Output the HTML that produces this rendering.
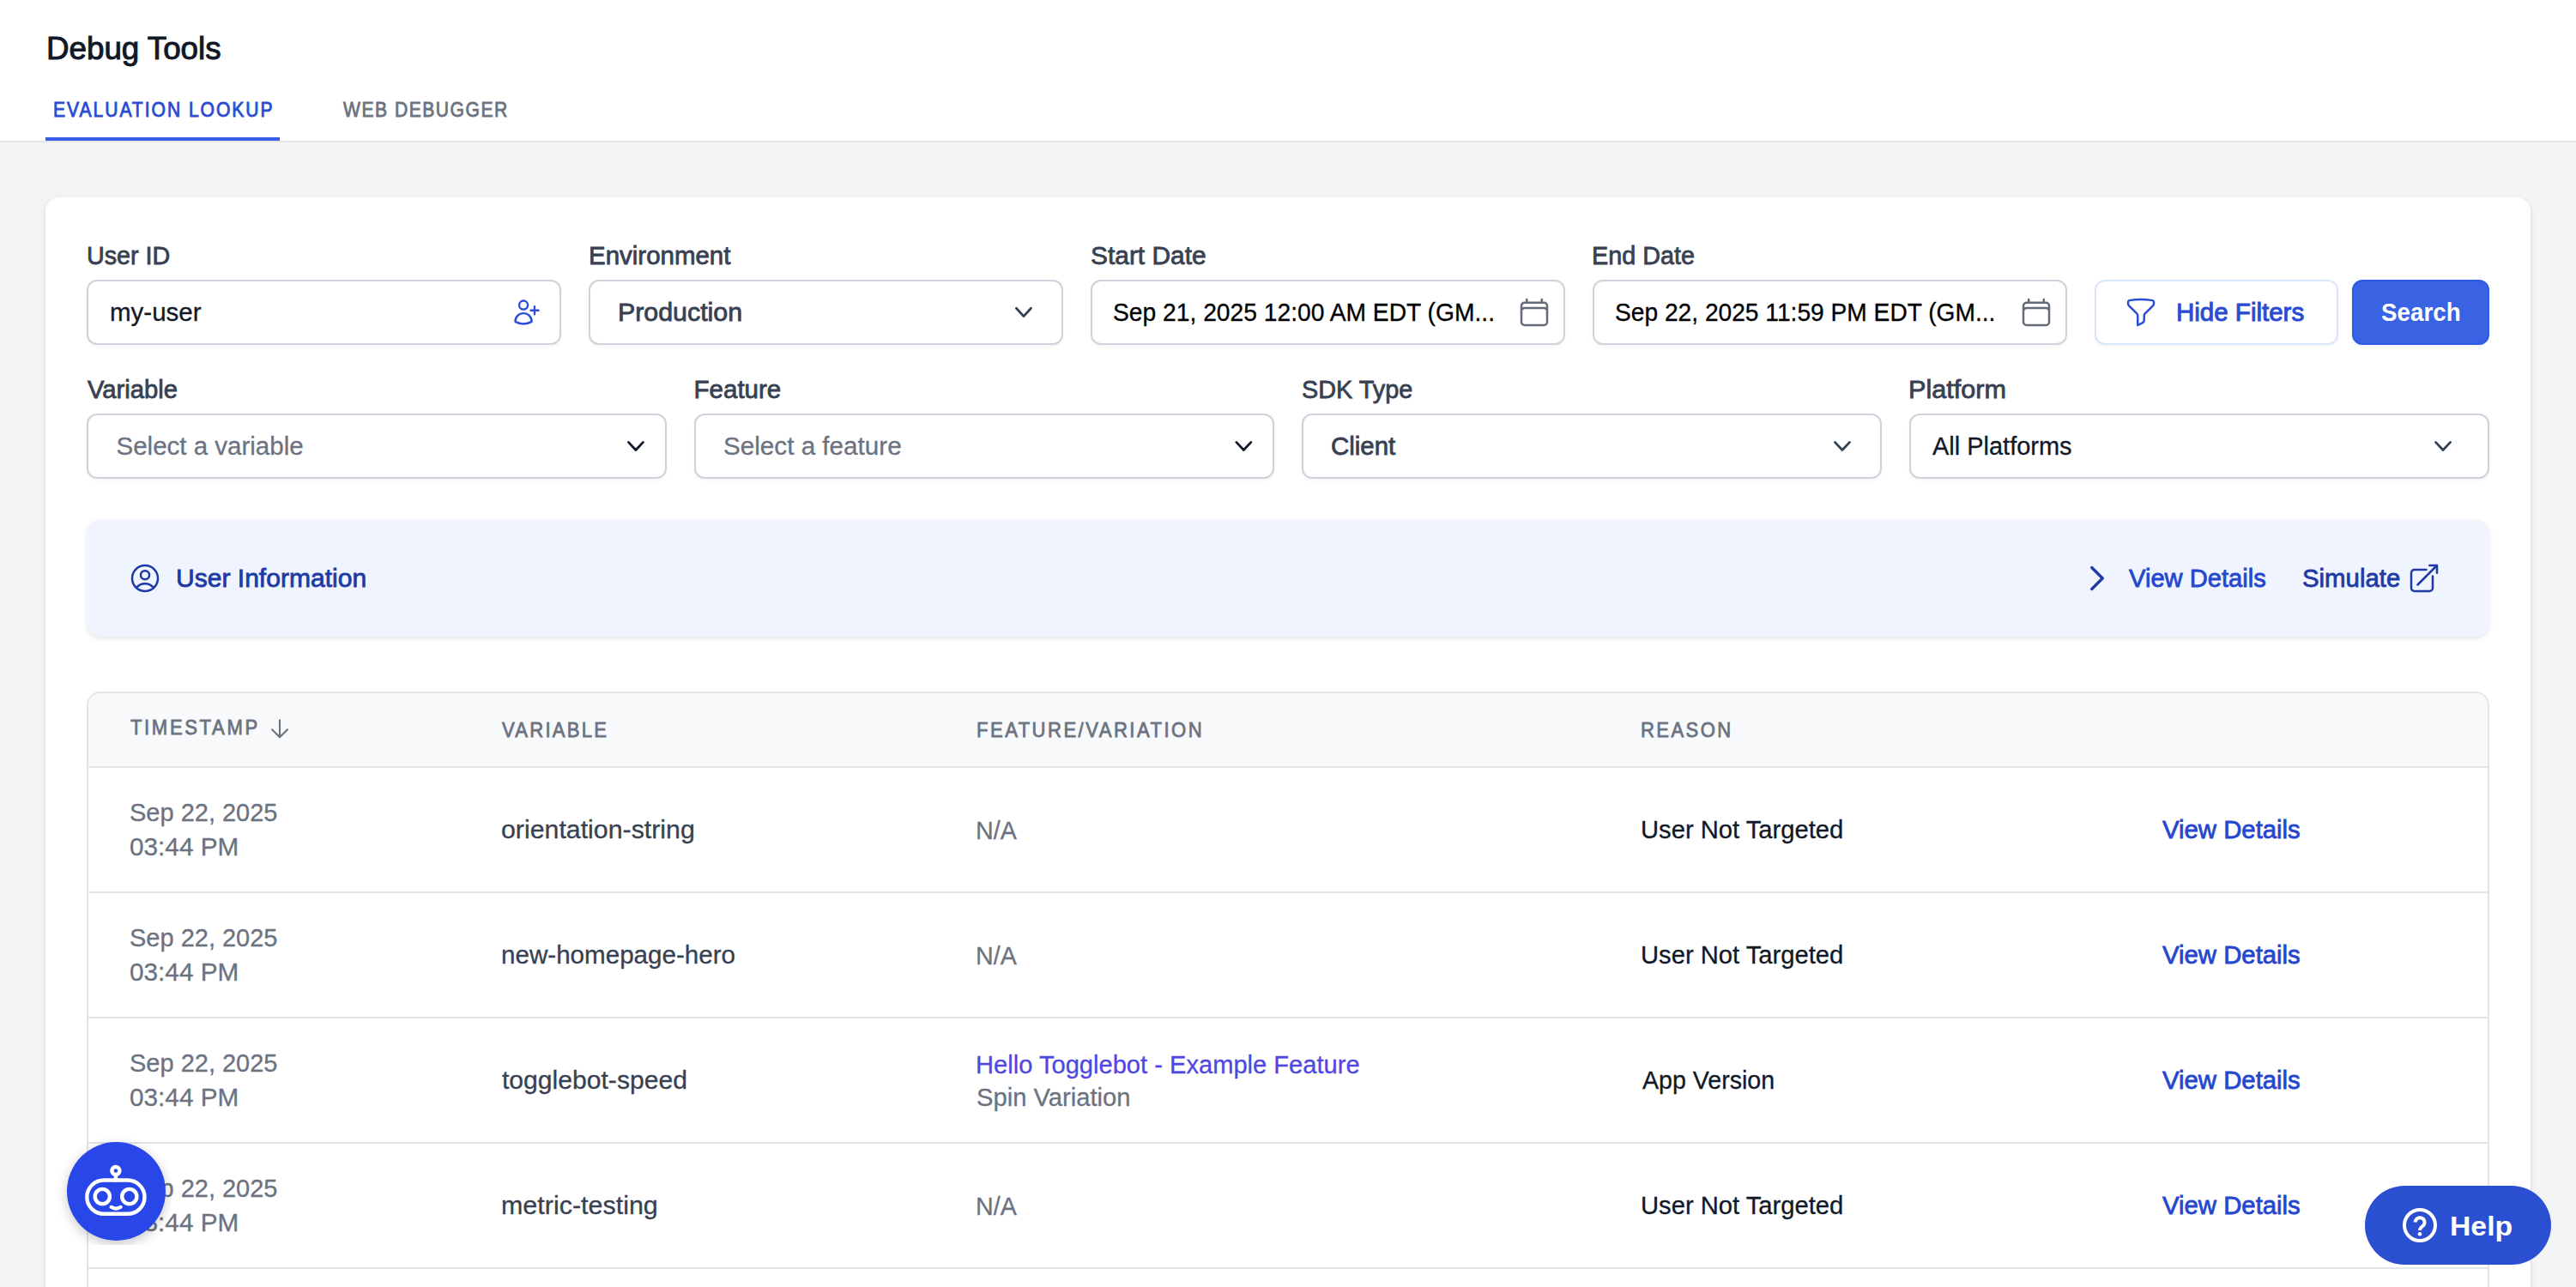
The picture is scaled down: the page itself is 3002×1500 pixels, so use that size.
<!DOCTYPE html>
<html><head><meta charset="utf-8"><title>Debug Tools</title>
<style>
html,body{margin:0;padding:0;}
body{width:3002px;height:1500px;overflow:hidden;position:relative;background:#f3f4f6;font-family:"Liberation Sans",sans-serif;}
.t{position:absolute;white-space:nowrap;}
svg{overflow:visible}
</style></head><body>
<div style="position:absolute;left:0px;top:0px;width:3002px;height:164px;background:#fff"></div>
<div style="position:absolute;left:0px;top:164px;width:3002px;height:2px;background:#e4e5e9"></div>
<div class="t" style="left:53.69px;top:38.70px;font-size:36.5px;line-height:36.5px;color:#111827;transform:scaleX(1.0065);transform-origin:0 0;-webkit-text-stroke-width:1.0px;">Debug Tools</div>
<div class="t" style="left:61.84px;top:116.26px;font-size:24.5px;line-height:24.5px;color:#2a4bd2;letter-spacing:2.294px;transform:scaleX(0.8600);transform-origin:0 0;-webkit-text-stroke-width:0.9px;">EVALUATION LOOKUP</div>
<div class="t" style="left:399.66px;top:116.26px;font-size:24.5px;line-height:24.5px;color:#6b7280;letter-spacing:1.772px;transform:scaleX(0.8600);transform-origin:0 0;-webkit-text-stroke-width:0.9px;">WEB DEBUGGER</div>
<div style="position:absolute;left:53px;top:160px;width:273px;height:4px;background:#3a5de6"></div>
<div style="position:absolute;left:53px;top:230px;width:2896px;height:1470px;background:#fff;border-radius:16px;box-shadow:0 2px 6px 0 rgba(0,0,0,0.1),0 2px 4px -2px rgba(0,0,0,0.1)"></div>
<div class="t" style="left:101.15px;top:283.32px;font-size:29.5px;line-height:29.5px;color:#374151;transform:scaleX(0.9732);transform-origin:0 0;-webkit-text-stroke-width:0.8px;">User ID</div>
<div class="t" style="left:685.50px;top:283.32px;font-size:29.5px;line-height:29.5px;color:#374151;transform:scaleX(0.9988);transform-origin:0 0;-webkit-text-stroke-width:0.8px;">Environment</div>
<div class="t" style="left:1270.69px;top:283.32px;font-size:29.5px;line-height:29.5px;color:#374151;transform:scaleX(1.0137);transform-origin:0 0;-webkit-text-stroke-width:0.8px;">Start Date</div>
<div class="t" style="left:1855.05px;top:283.32px;font-size:29.5px;line-height:29.5px;color:#374151;transform:scaleX(0.9750);transform-origin:0 0;-webkit-text-stroke-width:0.8px;">End Date</div>
<div style="position:absolute;left:101px;top:326px;width:553px;height:76px;background:#fff;border:2px solid #cfd2db;border-radius:12px;box-sizing:border-box;box-shadow:0 2px 4px rgba(0,0,0,0.04)"></div>
<div style="position:absolute;left:686px;top:326px;width:553px;height:76px;background:#fff;border:2px solid #cfd2db;border-radius:12px;box-sizing:border-box;box-shadow:0 2px 4px rgba(0,0,0,0.04)"></div>
<div style="position:absolute;left:1271px;top:326px;width:553px;height:76px;background:#fff;border:2px solid #cfd2db;border-radius:12px;box-sizing:border-box;box-shadow:0 2px 4px rgba(0,0,0,0.04)"></div>
<div style="position:absolute;left:1856px;top:326px;width:553px;height:76px;background:#fff;border:2px solid #cfd2db;border-radius:12px;box-sizing:border-box;box-shadow:0 2px 4px rgba(0,0,0,0.04)"></div>
<div class="t" style="left:128.00px;top:349.02px;font-size:29.5px;line-height:29.5px;color:#111827;-webkit-text-stroke-width:0.3px;">my-user</div>
<div class="t" style="left:719.94px;top:349.02px;font-size:29.5px;line-height:29.5px;color:#374151;transform:scaleX(1.0290);transform-origin:0 0;-webkit-text-stroke-width:0.8px;">Production</div>
<div class="t" style="left:1297.04px;top:349.02px;font-size:29.5px;line-height:29.5px;color:#000;transform:scaleX(0.9567);transform-origin:0 0;-webkit-text-stroke-width:0.3px;">Sep 21, 2025 12:00 AM EDT (GM...</div>
<div class="t" style="left:1882.05px;top:349.02px;font-size:29.5px;line-height:29.5px;color:#000;transform:scaleX(0.9545);transform-origin:0 0;-webkit-text-stroke-width:0.3px;">Sep 22, 2025 11:59 PM EDT (GM...</div>
<svg style="position:absolute;left:595.7px;top:346.2px;" width="36" height="36" viewBox="0 0 24 24" fill="none"><path stroke="#2a4ed8" stroke-width="1.6" stroke-linecap="round" stroke-linejoin="round" d="M18 7.5v3m0 0v3m0-3h3m-3 0h-3m-2.25-4.125a3.375 3.375 0 1 1-6.75 0 3.375 3.375 0 0 1 6.75 0ZM3 19.235v-.11a6.375 6.375 0 0 1 12.75 0v.109A12.318 12.318 0 0 1 9.374 21c-2.331 0-4.512-.645-6.374-1.766Z"/></svg>
<svg style="position:absolute;left:1768.3px;top:344.1px;" width="40" height="40" viewBox="0 0 24 24" fill="none"><path stroke="#646b79" stroke-width="1.5" stroke-linecap="round" stroke-linejoin="round" d="M6.75 3v2.25M17.25 3v2.25M3 18.75V7.5a2.25 2.25 0 0 1 2.25-2.25h13.5A2.25 2.25 0 0 1 21 7.5v11.25m-18 0A2.25 2.25 0 0 0 5.25 21h13.5A2.25 2.25 0 0 0 21 18.75m-18 0v-7.5A2.25 2.25 0 0 1 5.25 9h13.5A2.25 2.25 0 0 1 21 11.25v7.5"/></svg>
<svg style="position:absolute;left:2353.3px;top:344.1px;" width="40" height="40" viewBox="0 0 24 24" fill="none"><path stroke="#646b79" stroke-width="1.5" stroke-linecap="round" stroke-linejoin="round" d="M6.75 3v2.25M17.25 3v2.25M3 18.75V7.5a2.25 2.25 0 0 1 2.25-2.25h13.5A2.25 2.25 0 0 1 21 7.5v11.25m-18 0A2.25 2.25 0 0 0 5.25 21h13.5A2.25 2.25 0 0 0 21 18.75m-18 0v-7.5A2.25 2.25 0 0 1 5.25 9h13.5A2.25 2.25 0 0 1 21 11.25v7.5"/></svg>
<svg style="position:absolute;left:0px;top:0px;pointer-events:none" width="3002" height="1500" viewBox="0 0 3002 1500" fill="none"><polyline points="1184.40,359.30 1192.95,368.64 1201.50,359.30" stroke="#334155" stroke-width="2.8" stroke-linecap="round" stroke-linejoin="round"/></svg>
<div style="position:absolute;left:2441px;top:326px;width:284px;height:76px;background:#fff;border:2px solid #d9e5fa;border-radius:12px;box-sizing:border-box;box-shadow:0 2px 4px rgba(0,0,0,0.04)"></div>
<svg style="position:absolute;left:2475.2px;top:343.5px;" width="40" height="40" viewBox="0 0 24 24" fill="none"><path stroke="#2a4ed8" stroke-width="1.5" stroke-linecap="round" stroke-linejoin="round" d="M12 3c2.755 0 5.455.232 8.083.678.533.09.917.556.917 1.096v1.044a2.25 2.25 0 0 1-.659 1.591l-5.432 5.432a2.25 2.25 0 0 0-.659 1.591v2.927a2.25 2.25 0 0 1-1.244 2.013L9.75 21v-6.568a2.25 2.25 0 0 0-.659-1.591L3.659 7.409A2.25 2.25 0 0 1 3 5.818V4.774c0-.54.384-1.006.917-1.096A48.32 48.32 0 0 1 12 3Z"/></svg>
<div class="t" style="left:2536.00px;top:349.02px;font-size:29.5px;line-height:29.5px;color:#2a4bd2;-webkit-text-stroke-width:1.0px;">Hide Filters</div>
<div style="position:absolute;left:2741px;top:326px;width:160px;height:76px;background:#3a63e3;border:2px solid #2d5be3;box-sizing:border-box;border-radius:12px;box-shadow:0 2px 4px rgba(0,0,0,0.05)"></div>
<div class="t" style="left:2775.04px;top:349.95px;font-size:29px;line-height:29px;color:#fff;font-weight:700;transform:scaleX(0.9574);transform-origin:0 0;">Search</div>
<div class="t" style="left:102.00px;top:439.42px;font-size:29.5px;line-height:29.5px;color:#374151;transform:scaleX(0.9906);transform-origin:0 0;-webkit-text-stroke-width:0.8px;">Variable</div>
<div class="t" style="left:808.60px;top:439.42px;font-size:29.5px;line-height:29.5px;color:#374151;-webkit-text-stroke-width:0.8px;">Feature</div>
<div class="t" style="left:1516.72px;top:439.42px;font-size:29.5px;line-height:29.5px;color:#374151;transform:scaleX(0.9771);transform-origin:0 0;-webkit-text-stroke-width:0.8px;">SDK Type</div>
<div class="t" style="left:2223.93px;top:439.42px;font-size:29.5px;line-height:29.5px;color:#374151;transform:scaleX(1.0374);transform-origin:0 0;-webkit-text-stroke-width:0.8px;">Platform</div>
<div style="position:absolute;left:101px;top:482px;width:676px;height:76px;background:#fff;border:2px solid #cfd2db;border-radius:12px;box-sizing:border-box;box-shadow:0 2px 4px rgba(0,0,0,0.04)"></div>
<div style="position:absolute;left:809px;top:482px;width:676px;height:76px;background:#fff;border:2px solid #cfd2db;border-radius:12px;box-sizing:border-box;box-shadow:0 2px 4px rgba(0,0,0,0.04)"></div>
<div style="position:absolute;left:1517px;top:482px;width:676px;height:76px;background:#fff;border:2px solid #cfd2db;border-radius:12px;box-sizing:border-box;box-shadow:0 2px 4px rgba(0,0,0,0.04)"></div>
<div style="position:absolute;left:2225px;top:482px;width:676px;height:76px;background:#fff;border:2px solid #cfd2db;border-radius:12px;box-sizing:border-box;box-shadow:0 2px 4px rgba(0,0,0,0.04)"></div>
<div class="t" style="left:135.50px;top:504.82px;font-size:29.5px;line-height:29.5px;color:#6b7280;-webkit-text-stroke-width:0.3px;">Select a variable</div>
<div class="t" style="left:843.00px;top:504.82px;font-size:29.5px;line-height:29.5px;color:#6b7280;transform:scaleX(1.0049);transform-origin:0 0;-webkit-text-stroke-width:0.3px;">Select a feature</div>
<div class="t" style="left:1551.00px;top:504.82px;font-size:29.5px;line-height:29.5px;color:#374151;transform:scaleX(0.9973);transform-origin:0 0;-webkit-text-stroke-width:0.8px;">Client</div>
<div class="t" style="left:2251.80px;top:504.82px;font-size:29.5px;line-height:29.5px;color:#111827;transform:scaleX(0.9818);transform-origin:0 0;-webkit-text-stroke-width:0.3px;">All Platforms</div>
<svg style="position:absolute;left:0px;top:0px;pointer-events:none" width="3002" height="1500" viewBox="0 0 3002 1500" fill="none"><polyline points="732.40,515.40 740.95,524.54 749.50,515.40" stroke="#111827" stroke-width="2.8" stroke-linecap="round" stroke-linejoin="round"/></svg>
<svg style="position:absolute;left:0px;top:0px;pointer-events:none" width="3002" height="1500" viewBox="0 0 3002 1500" fill="none"><polyline points="1440.80,515.40 1449.35,524.54 1457.90,515.40" stroke="#111827" stroke-width="2.8" stroke-linecap="round" stroke-linejoin="round"/></svg>
<svg style="position:absolute;left:0px;top:0px;pointer-events:none" width="3002" height="1500" viewBox="0 0 3002 1500" fill="none"><polyline points="2138.40,515.40 2146.95,524.54 2155.50,515.40" stroke="#334155" stroke-width="2.8" stroke-linecap="round" stroke-linejoin="round"/></svg>
<svg style="position:absolute;left:0px;top:0px;pointer-events:none" width="3002" height="1500" viewBox="0 0 3002 1500" fill="none"><polyline points="2838.50,515.40 2847.05,524.54 2855.60,515.40" stroke="#334155" stroke-width="2.8" stroke-linecap="round" stroke-linejoin="round"/></svg>
<div style="position:absolute;left:101px;top:606px;width:2800px;height:136px;background:#eff4fe;border-radius:16px;box-shadow:0 2px 6px rgba(0,0,0,0.08),0 2px 4px -2px rgba(0,0,0,0.08)"></div>
<svg style="position:absolute;left:149.3px;top:653.9px;" width="40" height="40" viewBox="0 0 24 24" fill="none"><path stroke="#1e3aa6" stroke-width="1.5" stroke-linecap="round" stroke-linejoin="round" d="M17.982 18.725A7.488 7.488 0 0 0 12 15.75a7.488 7.488 0 0 0-5.982 2.975m11.963 0a9 9 0 1 0-11.963 0m11.963 0A8.966 8.966 0 0 1 12 21a8.966 8.966 0 0 1-5.982-2.275M15 9.75a3 3 0 1 1-6 0 3 3 0 0 1 6 0Z"/></svg>
<div class="t" style="left:204.66px;top:659.32px;font-size:29.5px;line-height:29.5px;color:#1e3aa6;transform:scaleX(1.0186);transform-origin:0 0;-webkit-text-stroke-width:0.8px;">User Information</div>
<svg style="position:absolute;left:2424.2px;top:653.7px;" width="40" height="40" viewBox="0 0 24 24" fill="none"><path stroke="#1e3aa6" stroke-width="2" stroke-linecap="round" stroke-linejoin="round" d="m8.25 4.5 7.5 7.5-7.5 7.5"/></svg>
<div class="t" style="left:2481.30px;top:659.02px;font-size:29.5px;line-height:29.5px;color:#2447cf;transform:scaleX(0.9877);transform-origin:0 0;-webkit-text-stroke-width:0.8px;">View Details</div>
<div class="t" style="left:2682.50px;top:659.02px;font-size:29.5px;line-height:29.5px;color:#1e3aa6;transform:scaleX(0.9956);transform-origin:0 0;-webkit-text-stroke-width:0.8px;">Simulate</div>
<svg style="position:absolute;left:2805.2px;top:653.9px;" width="40" height="40" viewBox="0 0 24 24" fill="none"><path stroke="#1e3aa6" stroke-width="1.5" stroke-linecap="round" stroke-linejoin="round" d="M13.5 6H5.25A2.25 2.25 0 0 0 3 8.25v10.5A2.25 2.25 0 0 0 5.25 21h10.5A2.25 2.25 0 0 0 18 18.75V10.5m-10.5 6L21 3m0 0h-5.25M21 3v5.25"/></svg>
<div style="position:absolute;left:101px;top:806px;width:2800px;height:894px;background:#fff;border:2px solid #e3e4e8;border-radius:16px;box-sizing:border-box;overflow:hidden"></div>
<div style="position:absolute;left:103px;top:808px;width:2796px;height:85px;background:#f8f9fb;border-radius:14px 14px 0 0"></div>
<div style="position:absolute;left:103px;top:893px;width:2796px;height:2px;background:#e3e4e8"></div>
<div class="t" style="left:152.00px;top:836.26px;font-size:24.5px;line-height:24.5px;color:#6b7280;letter-spacing:2.931px;transform:scaleX(0.9000);transform-origin:0 0;-webkit-text-stroke-width:0.8px;">TIMESTAMP</div>
<svg style="position:absolute;left:0;top:0" width="3002" height="1500" viewBox="0 0 3002 1500" fill="none"><path d="M326 839.2V858.4M317 850.3l9 9 9-9" stroke="#6b7280" stroke-width="2.1" stroke-linecap="round" stroke-linejoin="round"/></svg>
<div class="t" style="left:585.00px;top:838.56px;font-size:24.5px;line-height:24.5px;color:#6b7280;letter-spacing:2.508px;transform:scaleX(0.9000);transform-origin:0 0;-webkit-text-stroke-width:0.8px;">VARIABLE</div>
<div class="t" style="left:1137.90px;top:838.56px;font-size:24.5px;line-height:24.5px;color:#6b7280;letter-spacing:2.750px;transform:scaleX(0.9000);transform-origin:0 0;-webkit-text-stroke-width:0.8px;">FEATURE/VARIATION</div>
<div class="t" style="left:1911.60px;top:838.56px;font-size:24.5px;line-height:24.5px;color:#6b7280;letter-spacing:2.689px;transform:scaleX(0.9000);transform-origin:0 0;-webkit-text-stroke-width:0.8px;">REASON</div>
<div style="position:absolute;left:103px;top:1039px;width:2796px;height:2px;background:#e3e4e8"></div>
<div class="t" style="left:151.02px;top:932.32px;font-size:29.5px;line-height:29.5px;color:#6b7280;transform:scaleX(0.9828);transform-origin:0 0;-webkit-text-stroke-width:0.3px;">Sep 22, 2025</div>
<div class="t" style="left:150.99px;top:972.02px;font-size:29.5px;line-height:29.5px;color:#6b7280;transform:scaleX(1.0081);transform-origin:0 0;-webkit-text-stroke-width:0.3px;">03:44 PM</div>
<div class="t" style="left:583.57px;top:952.02px;font-size:29.5px;line-height:29.5px;color:#374151;transform:scaleX(1.0276);transform-origin:0 0;-webkit-text-stroke-width:0.3px;">orientation-string</div>
<div class="t" style="left:1136.86px;top:952.52px;font-size:29.5px;line-height:29.5px;color:#6b7280;transform:scaleX(0.9708);transform-origin:0 0;-webkit-text-stroke-width:0.3px;">N/A</div>
<div class="t" style="left:1911.52px;top:952.02px;font-size:29.5px;line-height:29.5px;color:#111827;transform:scaleX(0.9890);transform-origin:0 0;-webkit-text-stroke-width:0.3px;">User Not Targeted</div>
<div class="t" style="left:2520.00px;top:952.32px;font-size:29.5px;line-height:29.5px;color:#2447cf;transform:scaleX(0.9938);transform-origin:0 0;-webkit-text-stroke-width:0.8px;">View Details</div>
<div style="position:absolute;left:103px;top:1185px;width:2796px;height:2px;background:#e3e4e8"></div>
<div class="t" style="left:151.02px;top:1078.32px;font-size:29.5px;line-height:29.5px;color:#6b7280;transform:scaleX(0.9828);transform-origin:0 0;-webkit-text-stroke-width:0.3px;">Sep 22, 2025</div>
<div class="t" style="left:150.99px;top:1118.02px;font-size:29.5px;line-height:29.5px;color:#6b7280;transform:scaleX(1.0081);transform-origin:0 0;-webkit-text-stroke-width:0.3px;">03:44 PM</div>
<div class="t" style="left:583.60px;top:1098.02px;font-size:29.5px;line-height:29.5px;color:#374151;transform:scaleX(1.0030);transform-origin:0 0;-webkit-text-stroke-width:0.3px;">new-homepage-hero</div>
<div class="t" style="left:1136.86px;top:1098.52px;font-size:29.5px;line-height:29.5px;color:#6b7280;transform:scaleX(0.9708);transform-origin:0 0;-webkit-text-stroke-width:0.3px;">N/A</div>
<div class="t" style="left:1911.52px;top:1098.02px;font-size:29.5px;line-height:29.5px;color:#111827;transform:scaleX(0.9890);transform-origin:0 0;-webkit-text-stroke-width:0.3px;">User Not Targeted</div>
<div class="t" style="left:2520.00px;top:1098.32px;font-size:29.5px;line-height:29.5px;color:#2447cf;transform:scaleX(0.9938);transform-origin:0 0;-webkit-text-stroke-width:0.8px;">View Details</div>
<div style="position:absolute;left:103px;top:1331px;width:2796px;height:2px;background:#e3e4e8"></div>
<div class="t" style="left:151.02px;top:1224.32px;font-size:29.5px;line-height:29.5px;color:#6b7280;transform:scaleX(0.9828);transform-origin:0 0;-webkit-text-stroke-width:0.3px;">Sep 22, 2025</div>
<div class="t" style="left:150.99px;top:1264.02px;font-size:29.5px;line-height:29.5px;color:#6b7280;transform:scaleX(1.0081);transform-origin:0 0;-webkit-text-stroke-width:0.3px;">03:44 PM</div>
<div class="t" style="left:584.60px;top:1244.02px;font-size:29.5px;line-height:29.5px;color:#374151;transform:scaleX(1.0205);transform-origin:0 0;-webkit-text-stroke-width:0.3px;">togglebot-speed</div>
<div class="t" style="left:1137.03px;top:1225.52px;font-size:29.5px;line-height:29.5px;color:#4f46e5;transform:scaleX(0.9867);transform-origin:0 0;-webkit-text-stroke-width:0.3px;">Hello Togglebot - Example Feature</div>
<div class="t" style="left:1138.01px;top:1264.02px;font-size:29.5px;line-height:29.5px;color:#6b7280;transform:scaleX(0.9888);transform-origin:0 0;-webkit-text-stroke-width:0.3px;">Spin Variation</div>
<div class="t" style="left:1913.50px;top:1244.02px;font-size:29.5px;line-height:29.5px;color:#111827;transform:scaleX(0.9684);transform-origin:0 0;-webkit-text-stroke-width:0.3px;">App Version</div>
<div class="t" style="left:2520.00px;top:1244.32px;font-size:29.5px;line-height:29.5px;color:#2447cf;transform:scaleX(0.9938);transform-origin:0 0;-webkit-text-stroke-width:0.8px;">View Details</div>
<div style="position:absolute;left:103px;top:1477px;width:2796px;height:2px;background:#e3e4e8"></div>
<div class="t" style="left:151.02px;top:1370.32px;font-size:29.5px;line-height:29.5px;color:#6b7280;transform:scaleX(0.9828);transform-origin:0 0;-webkit-text-stroke-width:0.3px;">Sep 22, 2025</div>
<div class="t" style="left:150.99px;top:1410.02px;font-size:29.5px;line-height:29.5px;color:#6b7280;transform:scaleX(1.0081);transform-origin:0 0;-webkit-text-stroke-width:0.3px;">03:44 PM</div>
<div class="t" style="left:583.57px;top:1390.02px;font-size:29.5px;line-height:29.5px;color:#374151;transform:scaleX(1.0326);transform-origin:0 0;-webkit-text-stroke-width:0.3px;">metric-testing</div>
<div class="t" style="left:1136.86px;top:1390.52px;font-size:29.5px;line-height:29.5px;color:#6b7280;transform:scaleX(0.9708);transform-origin:0 0;-webkit-text-stroke-width:0.3px;">N/A</div>
<div class="t" style="left:1911.52px;top:1390.02px;font-size:29.5px;line-height:29.5px;color:#111827;transform:scaleX(0.9890);transform-origin:0 0;-webkit-text-stroke-width:0.3px;">User Not Targeted</div>
<div class="t" style="left:2520.00px;top:1390.32px;font-size:29.5px;line-height:29.5px;color:#2447cf;transform:scaleX(0.9938);transform-origin:0 0;-webkit-text-stroke-width:0.8px;">View Details</div>
<div style="position:absolute;left:62px;top:1315px;width:137px;height:136px;overflow:hidden"><div style="position:absolute;left:15.5px;top:15.7px;width:115px;height:115px;border-radius:50%;background:#2947e8;box-shadow:0 4px 14px rgba(0,0,0,0.22)"></div></div>
<svg style="position:absolute;left:77px;top:1330px;" width="116" height="116" viewBox="77 1330 116 116" fill="none"><g stroke="#fff" stroke-width="4.4" fill="none" stroke-linecap="round"><rect x="101.3" y="1375.5" width="67.2" height="39.3" rx="20" ry="19.6"/><circle cx="119.3" cy="1394.5" r="8.6"/><circle cx="150.8" cy="1394.5" r="8.6"/><circle cx="134.9" cy="1364.5" r="4.5"/><path d="M134.9 1369v6.5"/><path d="M129.5 1406.8q5.6 3.6 11.2 0" stroke-width="4"/></g></svg>
<div style="position:absolute;left:2756px;top:1382px;width:217px;height:92px;background:#2b4fd1;border-radius:46px"></div>
<svg style="position:absolute;left:2796px;top:1404px;" width="48" height="48" viewBox="2796 1404 48 48" fill="none"><circle cx="2820" cy="1428" r="18" stroke="#fff" stroke-width="4"/><path d="M2814.7 1424.6a5.4 5.4 0 1 1 8.6 4.4c-1.9 1.4-3.3 2.6-3.3 5.1" stroke="#fff" stroke-width="4" fill="none"/><circle cx="2820" cy="1438.3" r="2.3" fill="#fff"/></svg>
<div class="t" style="left:2855.29px;top:1412.91px;font-size:32px;line-height:32px;color:#fff;font-weight:700;transform:scaleX(1.0545);transform-origin:0 0;">Help</div>
</body></html>
